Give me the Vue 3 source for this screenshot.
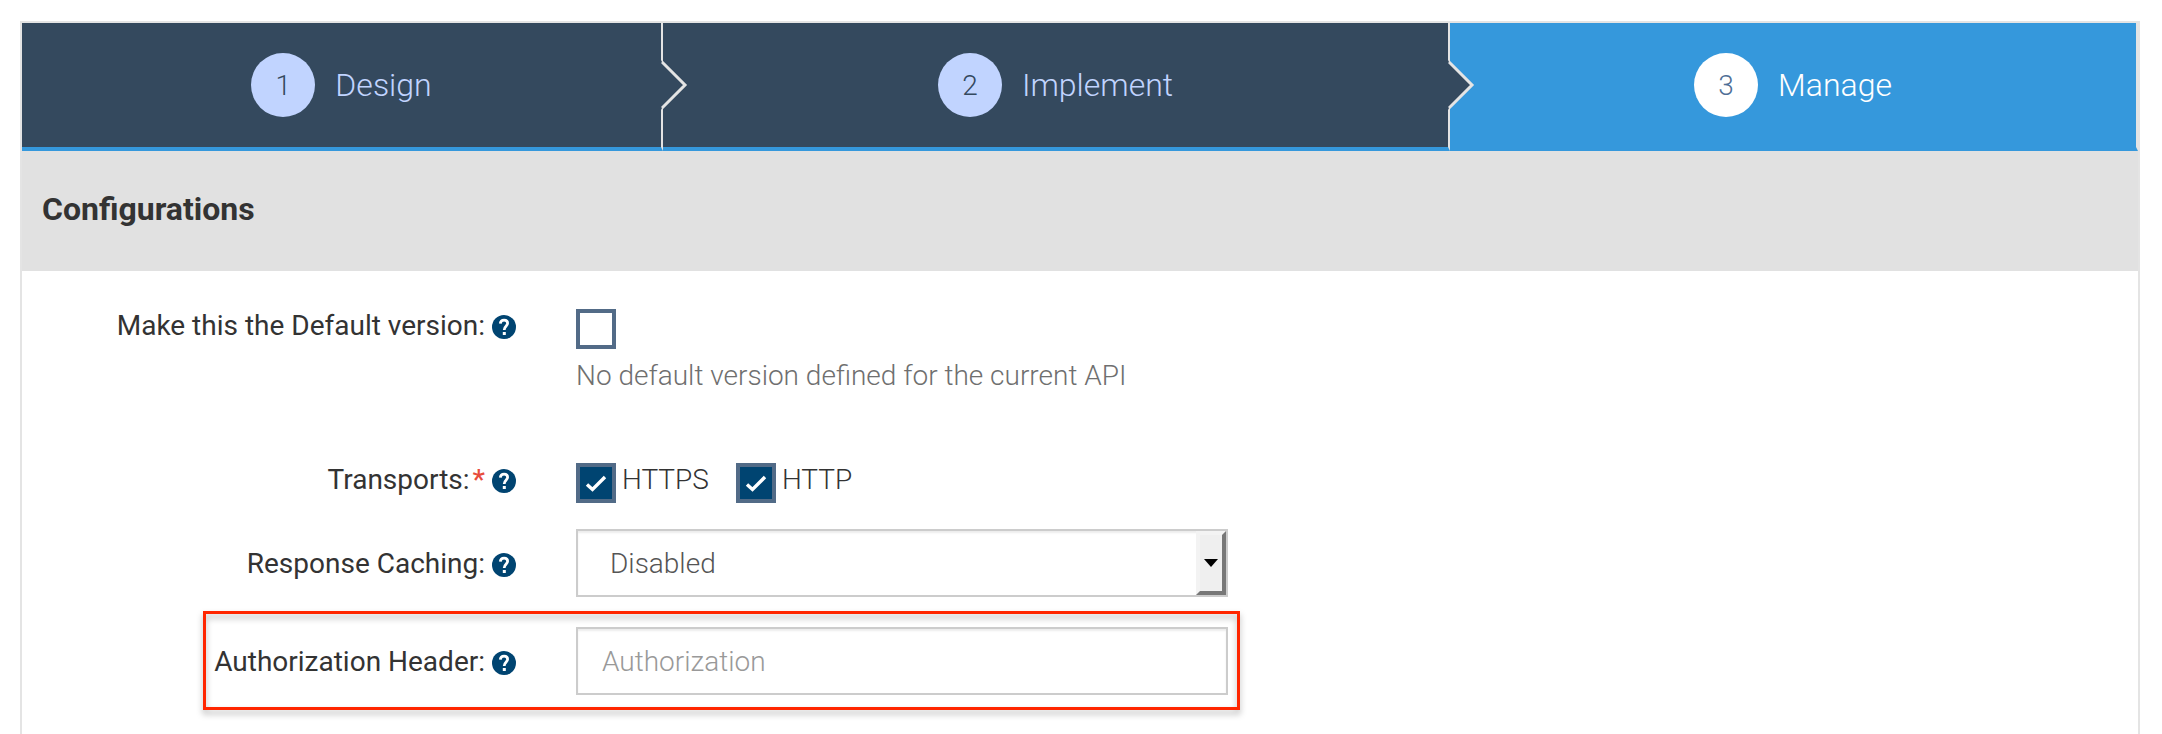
<script setup>
import { ref } from 'vue'

const steps = [
  { number: 1, title: 'Design', active: false },
  { number: 2, title: 'Implement', active: false },
  { number: 3, title: 'Manage', active: true }
]

const isDefault = ref(false)
const https = ref(true)
const http = ref(true)
const caching = ref('disabled')
const authHeader = ref('')
</script>

<template>
  <div class="page">
    <main class="panel">
      <nav class="wizard">
        <a
          v-for="step in steps"
          :key="step.number"
          href="#"
          class="step"
          :class="{ active: step.active }"
        >
          <span class="badge">{{ step.number }}</span>
          <span>{{ step.title }}</span>
          <svg v-if="step.number < 3" class="chevron" viewBox="0 0 28 52" aria-hidden="true">
            <path class="chevron-fill" d="M0 1 L1 3 L24 26 L1 49 L0 51 Z" />
            <path class="chevron-line" d="M1 3 L24 26 L1 49" />
          </svg>
        </a>
      </nav>

      <h2 class="section-title">Configurations</h2>

      <form class="form" @submit.prevent>
        <div class="row row-default">
          <div class="label">
            <label for="default-version">Make this the Default version:</label>
            <button type="button" class="help" aria-label="Help">
              <svg viewBox="0 0 24 24" aria-hidden="true">
                <circle cx="12" cy="12" r="12" />
                <path d="M8.3 8.7C8.5 6.4 10 5.2 12.1 5.2C14.2 5.2 15.6 6.5 15.6 8.3C15.6 11 12.3 11 12.2 15" />
                <rect x="10.8" y="17" width="3" height="3" />
              </svg>
            </button>
          </div>
          <div>
            <div class="checks">
              <input id="default-version" v-model="isDefault" type="checkbox" class="check" />
            </div>
            <p class="hint">No default version defined for the current API</p>
          </div>
        </div>

        <div class="row row-checks">
          <div class="label">
            <span>Transports:<span class="required">*</span></span>
            <button type="button" class="help" aria-label="Help">
              <svg viewBox="0 0 24 24" aria-hidden="true">
                <circle cx="12" cy="12" r="12" />
                <path d="M8.3 8.7C8.5 6.4 10 5.2 12.1 5.2C14.2 5.2 15.6 6.5 15.6 8.3C15.6 11 12.3 11 12.2 15" />
                <rect x="10.8" y="17" width="3" height="3" />
              </svg>
            </button>
          </div>
          <div class="checks">
            <label class="option"><input v-model="https" type="checkbox" class="check" />HTTPS</label>
            <label class="option"><input v-model="http" type="checkbox" class="check" />HTTP</label>
          </div>
        </div>

        <div class="row row-field">
          <div class="label">
            <label for="caching">Response Caching:</label>
            <button type="button" class="help" aria-label="Help">
              <svg viewBox="0 0 24 24" aria-hidden="true">
                <circle cx="12" cy="12" r="12" />
                <path d="M8.3 8.7C8.5 6.4 10 5.2 12.1 5.2C14.2 5.2 15.6 6.5 15.6 8.3C15.6 11 12.3 11 12.2 15" />
                <rect x="10.8" y="17" width="3" height="3" />
              </svg>
            </button>
          </div>
          <div class="select-wrap">
            <select id="caching" v-model="caching" class="field select">
              <option value="disabled">Disabled</option>
              <option value="enabled">Enabled</option>
            </select>
            <span class="select-button" aria-hidden="true">
              <svg viewBox="0 0 14 8"><path d="M0 0H14L7 8Z" /></svg>
            </span>
          </div>
        </div>

        <div class="row row-field highlighted">
          <div class="label">
            <label for="auth-header">Authorization Header:</label>
            <button type="button" class="help" aria-label="Help">
              <svg viewBox="0 0 24 24" aria-hidden="true">
                <circle cx="12" cy="12" r="12" />
                <path d="M8.3 8.7C8.5 6.4 10 5.2 12.1 5.2C14.2 5.2 15.6 6.5 15.6 8.3C15.6 11 12.3 11 12.2 15" />
                <rect x="10.8" y="17" width="3" height="3" />
              </svg>
            </button>
          </div>
          <input
            id="auth-header"
            v-model="authHeader"
            type="text"
            class="field"
            placeholder="Authorization"
          />
        </div>
      </form>
    </main>
  </div>
</template>

<style>
body {
  margin: 0;
  background: #fff;
}
</style>

<style scoped>
* {
  box-sizing: border-box;
}
.page {
  display: flex;
  min-height: 100vh;
  padding: 21px 22px 0 20px;
  font-family: Roboto, "Liberation Sans", sans-serif;
  font-size: 28px;
  font-weight: 300;
  line-height: 40px;
  color: #333;
}
.panel {
  flex: 1;
  min-width: 0;
  border: 2px solid #e4e4e4;
  border-bottom: 0;
}
.wizard {
  display: grid;
  grid-template-columns: 641fr 787fr 688fr;
}
.step {
  position: relative;
  display: flex;
  align-items: center;
  justify-content: center;
  gap: 20px;
  padding: 30px 0;
  border-right: 2px solid #e4e4e4;
  border-bottom: 4px solid #3598dc;
  background: #34495e;
  color: #c1d4ff;
  font-size: 32px;
  text-decoration: none;
}
.step.active {
  background: #3598dc;
  color: #fff;
}
.badge {
  display: flex;
  align-items: center;
  justify-content: center;
  width: 64px;
  height: 64px;
  padding-top: 2px;
  border-radius: 50%;
  background: #c1d4ff;
  color: #34495e;
  font-size: 28px;
}
.active .badge {
  background: #fff;
  color: #4f6f96;
}
.chevron {
  position: absolute;
  z-index: 1;
  left: 100%;
  top: 36px;
  width: 28px;
  height: 52px;
}
.chevron-fill {
  fill: #34495e;
}
.chevron-line {
  fill: none;
  stroke: #e4e4e4;
  stroke-width: 3;
}
.section-title {
  margin: 0;
  padding: 38px 20px 42px;
  background: #e1e1e1;
  font-size: 32px;
  font-weight: 700;
  line-height: 40px;
}
.form {
  padding: 35px 0 39px;
}
.row {
  display: grid;
  grid-template-columns: 494px minmax(0, 652px);
  column-gap: 60px;
}
.row-default {
  margin-bottom: 64px;
}
.row-checks {
  margin-bottom: 26px;
}
.row-field {
  position: relative;
  max-width: 1206px;
}
.row-field + .row-field {
  margin-top: 30px;
}
.label {
  display: flex;
  align-items: center;
  justify-content: flex-end;
  align-self: start;
  gap: 7px;
  font-weight: 400;
}
.row-field .label {
  padding-top: 15px;
}
.required {
  margin-left: 3px;
  color: #e74c3c;
  font-weight: 500;
}
.help {
  width: 24px;
  height: 24px;
  margin: 2px 0 0;
  padding: 0;
  border: 0;
  background: none;
}
.help svg {
  display: block;
}
.help circle {
  fill: #004471;
}
.help path {
  fill: none;
  stroke: #fff;
  stroke-width: 2.8;
}
.help rect {
  fill: #fff;
}
.checks {
  display: flex;
  gap: 27px;
}
.option {
  display: flex;
  gap: 6px;
}
.check {
  appearance: none;
  width: 40px;
  height: 40px;
  margin: 3px 0 0;
  border: 4px solid #526b87;
  background: #fff;
}
.check:checked {
  background: #004471 url("data:image/svg+xml,%3Csvg xmlns='http://www.w3.org/2000/svg' viewBox='0 0 32 32'%3E%3Cpath d='M7 17.5L12.5 22.5L25 10' fill='none' stroke='white' stroke-width='3.4'/%3E%3C/svg%3E") center / 32px 32px no-repeat;
}
.hint {
  margin: 7px 0 0;
  color: #6f6f6f;
}
.field {
  display: block;
  width: 100%;
  height: 68px;
  margin: 0;
  padding: 0 24px;
  border: 2px solid #ccc;
  border-radius: 0;
  background: #fff;
  box-shadow: inset 0 2px 2px rgba(0, 0, 0, 0.075);
  font: inherit;
  color: #555;
}
.field::placeholder {
  color: #999;
  opacity: 1;
}
.select-wrap {
  position: relative;
}
.select {
  appearance: none;
  padding: 1px 32px 0;
}
.select-button {
  position: absolute;
  top: 2px;
  right: 2px;
  bottom: 2px;
  display: flex;
  align-items: center;
  justify-content: center;
  width: 30px;
  border: 4px solid;
  border-color: #f3f3f3 #777 #777 #f3f3f3;
  background: #efefef;
  pointer-events: none;
}
.select-button svg {
  width: 14px;
  height: 8px;
}
.highlighted::before {
  content: "";
  position: absolute;
  inset: -16px -12px -15px 181px;
  border: 3px solid #ff2600;
  filter: drop-shadow(0 4px 3px rgba(0, 0, 0, 0.3));
  pointer-events: none;
}
</style>
